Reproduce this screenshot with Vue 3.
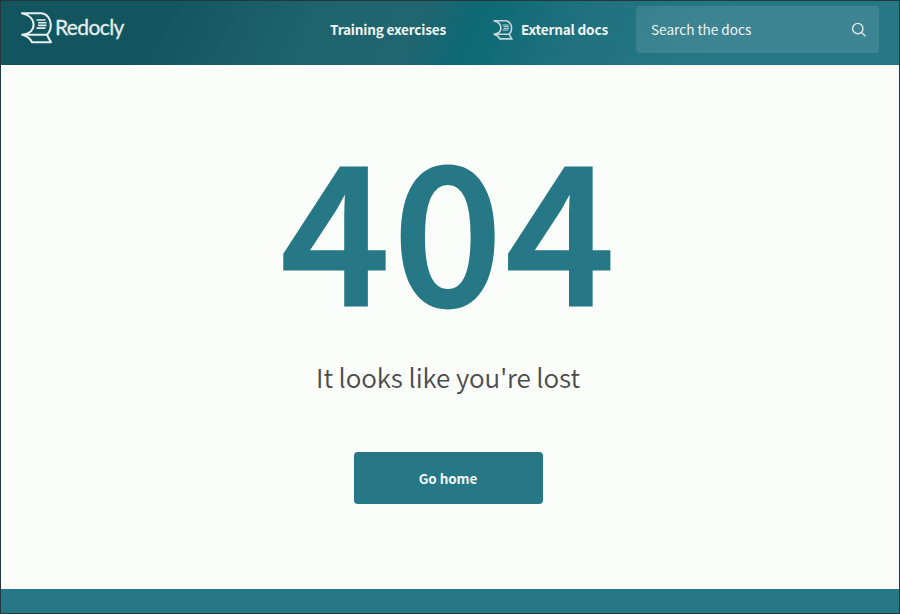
<script setup>
const homeLabel = 'Go home'
</script>

<template>
  <div class="page">
    <header class="navbar">
      <a class="logo">
        <svg class="logo-mark" viewBox="0 0 32 32" fill="none">
          <path d="M1 1.2H20.5C26 1.8 29.8 7 29.8 12.8C29.8 17 28.5 20.5 26 22.7H1.2C8.5 22 12.6 18 12.6 12.8C12.6 7.5 8.5 2.8 1 1.2Z" />
          <path d="M1.2 22.7C6 23.8 9 26 11 30.2H30C28.8 28 27 25.5 26 22.7" />
          <path class="lines" d="M15.5 8H24.5M17 10.7H25.5M17 13.4H25.5M15.5 16.1H24.5" />
        </svg>
        <span class="logo-text">Redocly</span>
      </a>
      <nav class="links">
        <a class="link training">Training exercises</a>
        <a class="link external">
          <svg class="link-icon" viewBox="0 0 32 32" fill="none">
            <path d="M1 1.2H20.5C26 1.8 29.8 7 29.8 12.8C29.8 17 28.5 20.5 26 22.7H1.2C8.5 22 12.6 18 12.6 12.8C12.6 7.5 8.5 2.8 1 1.2Z" />
            <path d="M1.2 22.7C6 23.8 9 26 11 30.2H30C28.8 28 27 25.5 26 22.7" />
            <path class="lines" d="M15.5 8H24.5M17 10.7H25.5M17 13.4H25.5M15.5 16.1H24.5" />
          </svg>
          <span class="link-label">External docs</span>
        </a>
      </nav>
      <div class="search">
        <span class="placeholder">Search the docs</span>
        <svg class="search-icon" viewBox="0 0 16 16" fill="none">
          <circle cx="6.8" cy="6.6" r="5.2" />
          <path d="M10.6 10.5L14.5 14.3" />
        </svg>
      </div>
    </header>
    <main class="content">
      <h1 class="code">404</h1>
      <p class="message">It looks like you're lost</p>
      <a class="button">{{ homeLabel }}</a>
    </main>
    <footer class="footer"></footer>
  </div>
</template>

<style>
body {
  margin: 0;
}
</style>

<style scoped>
.page {
  box-sizing: border-box;
  width: 900px;
  height: 614px;
  border: 1px solid #20383e;
  display: flex;
  flex-direction: column;
  overflow: hidden;
  background: #fbfdfa;
  font-family: "Noto Sans CJK SC", "Noto Sans", sans-serif;
}
.navbar {
  box-sizing: border-box;
  flex: 0 0 64px;
  display: flex;
  align-items: flex-start;
  padding: 5px 20px 0 20px;
  color: #f0f5f5;
  background: linear-gradient(115deg, #12555e 0%, #12555e 17%, #1f636d 35%, #20656f 46%, #0d6974 52%, #1f727e 64%, #277886 80%);
}
.logo {
  display: flex;
  align-items: center;
  width: 309px;
  height: 44px;
}
.logo-mark {
  width: 32px;
  height: 32px;
  stroke: #e4eeef;
  stroke-width: 2.1;
  stroke-linejoin: round;
}
.lines {
  stroke-width: 1.6;
}
.logo-text {
  margin-left: 2px;
  color: #e4eeef;
  font-family: Lato, sans-serif;
  font-size: 21px;
  line-height: 30px;
  padding-bottom: 2px;
  letter-spacing: -0.6px;
  -webkit-text-stroke: 0.3px #e4eeef;
}
.links {
  display: flex;
  align-items: center;
  width: 306px;
  height: 47px;
}
.link {
  display: flex;
  align-items: center;
  font-size: 13.6px;
  line-height: 20px;
  font-weight: 700;
  letter-spacing: -0.2px;
  white-space: nowrap;
}
.training {
  width: 163px;
  padding-bottom: 2px;
}
.link-label {
  padding-bottom: 2px;
}
.link-icon {
  width: 20px;
  height: 20px;
  margin-right: 8px;
  stroke: #c5d9dc;
  stroke-width: 2.6;
}
.search {
  box-sizing: border-box;
  display: flex;
  align-items: center;
  justify-content: space-between;
  width: 243px;
  height: 47px;
  padding: 0 12px 0 15px;
  border-radius: 4px;
  background: rgba(255, 255, 255, 0.1);
  font-size: 13.6px;
  line-height: 20px;
}
.placeholder {
  padding-bottom: 1px;
}
.search-icon {
  width: 16px;
  height: 16px;
  stroke: #dce9eb;
  stroke-width: 1.4;
}
.content {
  flex: 1;
  display: flex;
  flex-direction: column;
  align-items: center;
  padding-right: 4px;
}
.code {
  margin: 57px -3px 0 0;
  font-size: 191px;
  line-height: 200px;
  font-weight: 500;
  letter-spacing: 3.4px;
  -webkit-text-stroke: 3px #277886;
  color: #277886;
}
.message {
  margin: 35px 0 0;
  font-size: 26px;
  line-height: 40px;
  font-weight: 350;
  letter-spacing: -0.1px;
  color: #4b4b4f;
}
.button {
  display: flex;
  align-items: center;
  justify-content: center;
  width: 189px;
  height: 52px;
  margin-top: 55px;
  border-radius: 4px;
  background: #277886;
  color: #f0f5f5;
  font-size: 13.5px;
  letter-spacing: -0.1px;
  font-weight: 700;
}
.footer {
  flex: 0 0 24px;
  background: #277886;
}
</style>
